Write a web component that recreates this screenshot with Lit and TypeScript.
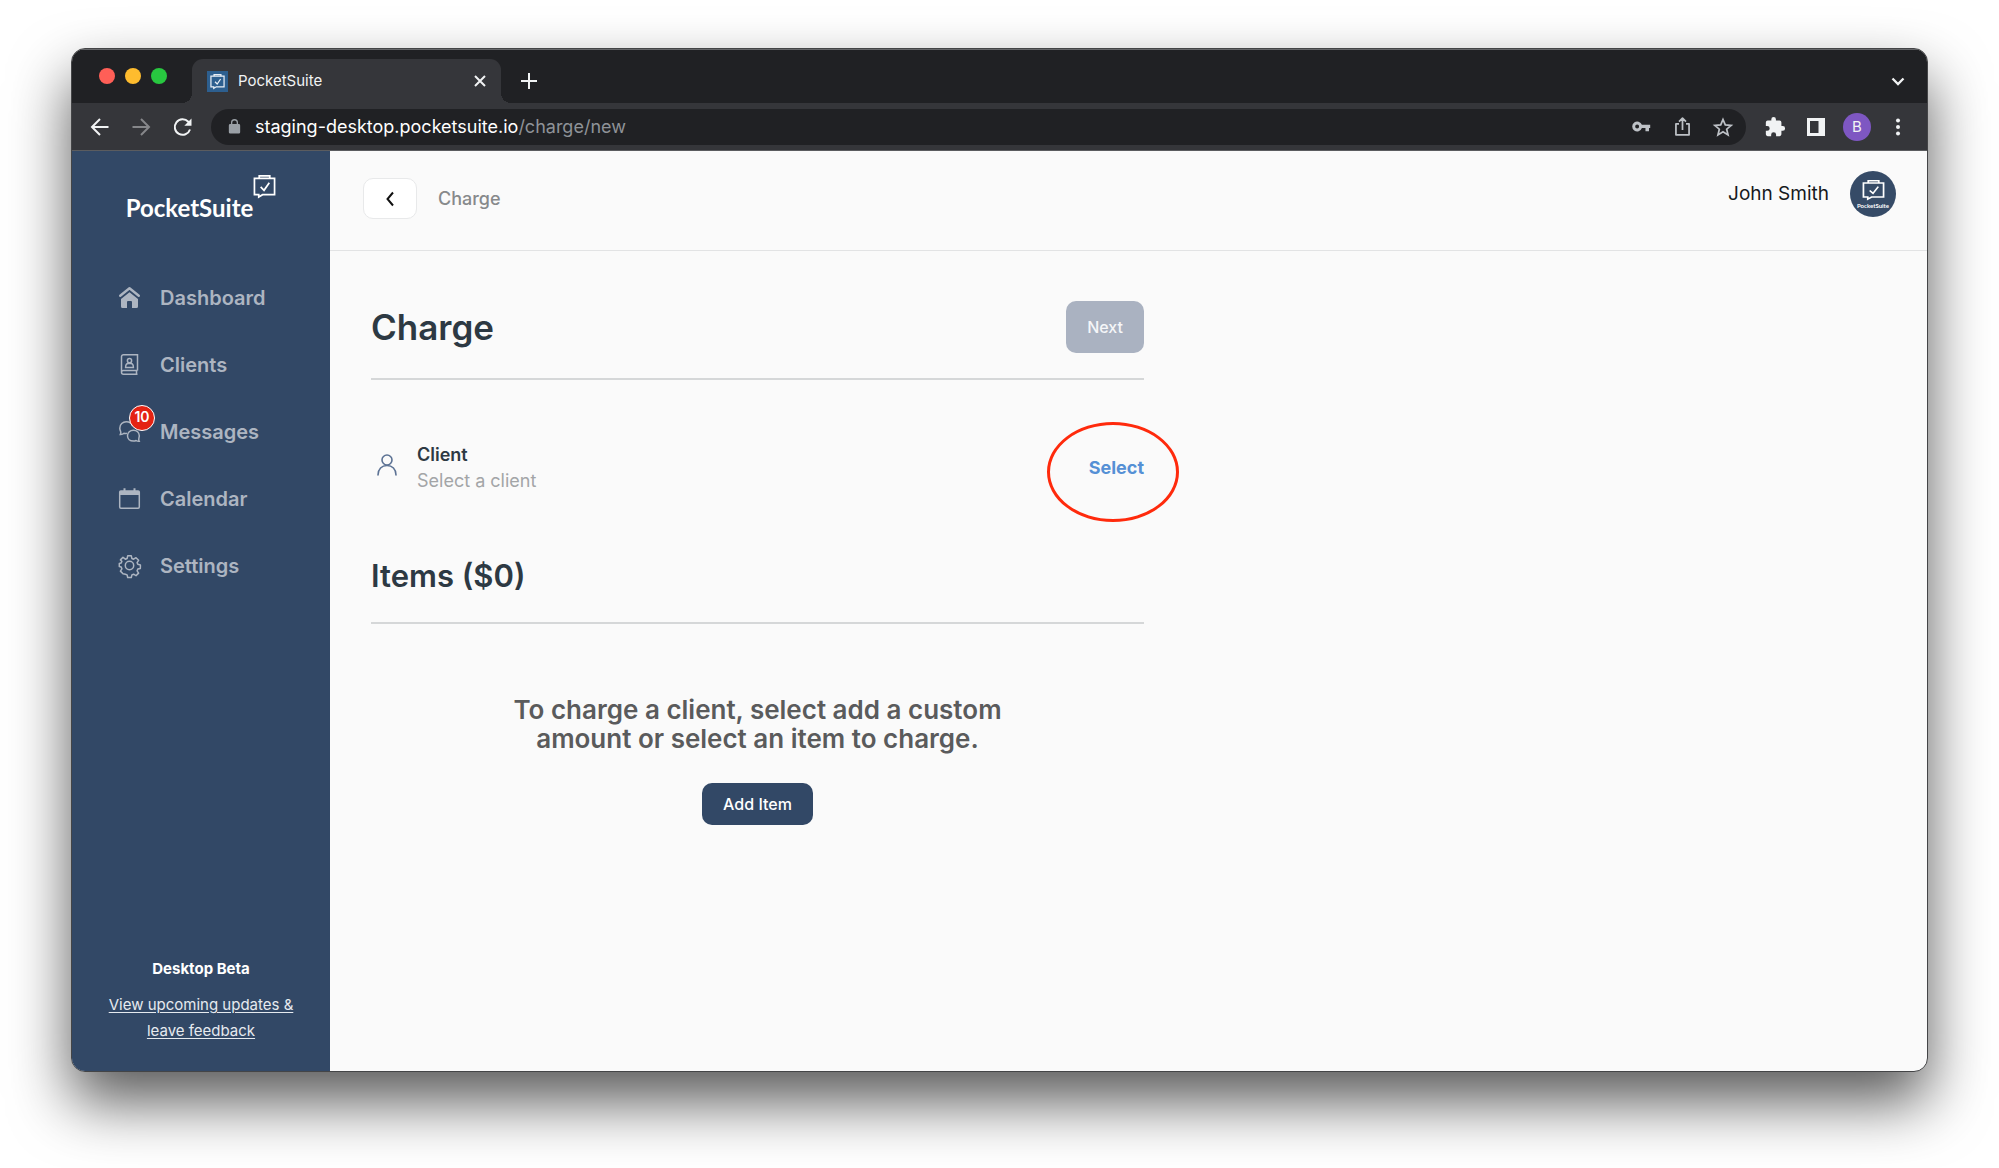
import { LitElement, html, css, svg, nothing } from "lit";
import type { SVGTemplateResult } from "lit";
import { customElement } from "lit/decorators.js";

const briefcase = svg`
  <path d="M6 20.5H1.5v-17h21v17H10L6 23z" />
  <path d="M6.5 3.5V1h11v2.500" />
  <path d="M8 12.500l3.500 3.500L17 8" />`;

interface NavItem {
  label: string;
  icon: SVGTemplateResult;
  badge?: number;
}

const navItems: NavItem[] = [
  {
    label: "Dashboard",
    icon: svg`
      <path d="M1.200 8.700 10.500 1.200l9.300 7.500" stroke-width="2.400" stroke-linecap="round" stroke-linejoin="round" />
      <path d="M10.500 5.300 19 12v7.500a1.500 1.500 0 0 1-1.500 1.500H13v-6a1 1 0 0 0-1-1H9a1 1 0 0 0-1 1v6H3.500A1.500 1.500 0 0 1 2 19.500V12z" fill="currentColor" stroke="none" />`,
  },
  {
    label: "Clients",
    icon: svg`
      <path d="M18.500 16.500V.700H4.500A2 2 0 0 0 2.500 2.700v15.600a2 2 0 0 0 2 2H18.500M2.500 18.300a1.800 1.800 0 0 1 2-1.800h14M17.500 16.500v3.800" />
      <circle cx="10.500" cy="6.700" r="2.100" />
      <path d="M6.600 13.500c0-2.300 1-3.800 2.500-3.900h2.800c1.500.1 2.500 1.600 2.500 3.900z" />`,
  },
  {
    label: "Messages",
    badge: 10,
    icon: svg`
      <path d="M8 12.300c-1.300.5-2 .4-3 0-1 1-2.200 1.300-3.700 1.200.6-1.300.8-2.200.3-3.200C1.100 9.300.800 8.300.800 7.200.800 3.400 3.700.800 7.300.800c3 0 5.500 1.700 6.200 4.200" />
      <path d="M20.200 20.300c-.6-1.200-.6-2.200-.3-3.300.3-.8.400-1.300.4-2.200 0-3.200-2.600-5.600-5.900-5.600s-5.900 2.400-5.900 5.600 2.600 5.300 5.900 5.300c1 0 1.900-.2 2.700-.6.900.6 1.800.9 3.100.8z" />`,
  },
  {
    label: "Calendar",
    icon: svg`
      <rect x=".700" y="3" width="19.600" height="17.300" rx="1.200" />
      <path d="M.700 3h19.600v4H.700z" fill="currentColor" stroke="none" />
      <path d="M5.500.200v5M15.500.200v5" stroke-width="2" />`,
  },
  {
    label: "Settings",
    icon: svg`
      <circle cx="10.500" cy="10.500" r="4.200" />
      <path stroke-linejoin="round" d="M8.700.800h3.600l.6 2.700 1.700.7 2.400-1.500 1.300 1.300 1.300 1.300-1.500 2.300.7 1.700 2.600.6v1.800l-.1 1.800-2.500.6-.7 1.700 1.500 2.300-1.300 1.300-1.300 1.300-2.400-1.500-1.700.7-.6 2.600H8.700l-.6-2.600-1.700-.7L4 18.700l-1.300-1.300-1.300-1.300 1.500-2.300-.7-1.700-1.900-.5V8.400l1.900-.5.700-1.700L1.400 4.900l1.300-1.300L4 2.300l2.400 1.900 1.700-.7z" />`,
  },
];

@customElement("app-root")
class AppRoot extends LitElement {
  static styles = css`
    :host {
      --navy: #324866;
      --ink: #2d3943;
      --rule: #d5d7d8;
      display: flex;
      box-sizing: border-box;
      min-height: 100vh;
      padding: 48px 71px 96px;
      background: #fff;
      color: var(--ink);
      font-family: Inter, "Liberation Sans", sans-serif;
      font-size: 18px;
      line-height: 26px;
    }
    * {
      box-sizing: border-box;
    }
    h1,
    h2,
    p {
      margin: 0;
    }
    button {
      font: inherit;
      color: inherit;
      border: 0;
      padding: 0;
      background: none;
    }
    a {
      color: inherit;
    }
    svg {
      display: block;
      fill: none;
      stroke: currentColor;
      flex: none;
      overflow: visible;
    }
    .solid {
      fill: currentColor;
      stroke: none;
    }
    .window {
      flex: 1;
      min-width: 0;
      display: flex;
      flex-direction: column;
      border: 1px solid #444547;
      border-radius: 14px;
      overflow: hidden;
      background: #fafafa;
      box-shadow: 0 30px 60px rgba(0, 0, 0, 0.65);
    }

    /* Browser chrome */
    .tabs {
      display: flex;
      align-items: stretch;
      height: 54px;
      padding: 0 17px 0 27px;
      background: #202124;
      box-shadow: inset 0 1px #66676a;
      color: #f1f3f4;
    }
    .lights {
      display: flex;
      align-items: center;
      gap: 10px;
      margin-right: 25px;
    }
    .light {
      width: 16px;
      height: 16px;
      border-radius: 50%;
    }
    .close {
      background: #ff5f57;
    }
    .minimise {
      background: #febc2e;
    }
    .zoom {
      background: #28c840;
    }
    .tab {
      position: relative;
      display: flex;
      align-items: center;
      width: 309px;
      margin-top: 10px;
      padding: 0 11px 0 15px;
      border-radius: 11px 11px 0 0;
      background: #35363a;
      font-size: 15px;
    }
    .tab::before,
    .tab::after {
      content: "";
      position: absolute;
      bottom: 0;
      width: 10px;
      height: 10px;
    }
    .tab::before {
      right: 100%;
      background: radial-gradient(circle at 0 0, transparent 10px, #35363a 10px);
    }
    .tab::after {
      left: 100%;
      background: radial-gradient(circle at 100% 0, transparent 10px, #35363a 10px);
    }
    .favicon {
      padding: 3px;
      margin-right: 10px;
      background: #2d5f8f;
      color: #e8eef5;
    }
    .tab-title {
      flex: 1;
    }
    .new-tab {
      margin: 10px auto 0 18px;
    }
    .tab-search {
      margin-top: 10px;
    }
    .toolbar {
      display: flex;
      align-items: center;
      gap: 13px;
      height: 48px;
      padding: 0 15px 0 14px;
      background: #35363a;
      border-bottom: 1px solid #5b5c5f;
      color: #f1f3f4;
    }
    .tool {
      display: grid;
      place-items: center;
      width: 28px;
      height: 28px;
      flex: none;
    }
    .muted {
      color: #86878a;
    }
    .omnibox {
      flex: 1;
      min-width: 0;
      display: flex;
      align-items: center;
      gap: 13px;
      height: 36px;
      margin: 0 2px;
      padding: 0 9px;
      border-radius: 18px;
      background: #202124;
      color: #bdc1c6;
    }
    .site {
      flex: 1;
      min-width: 0;
      display: flex;
      align-items: center;
      gap: 7px;
    }
    .lock {
      color: #9aa0a6;
    }
    .host {
      color: #fff;
    }
    .path {
      color: #8f9398;
    }
    .profile {
      border-radius: 50%;
      background: #7e57c2;
      font-size: 15px;
    }

    /* Application */
    .app {
      flex: 1;
      display: flex;
    }
    .sidebar {
      display: flex;
      flex-direction: column;
      width: 258px;
      flex: none;
      padding-bottom: 27px;
      background: var(--navy);
      color: #fff;
    }
    .brand {
      display: flex;
      justify-content: center;
      height: 113px;
      padding-top: 24px;
      text-decoration: none;
      font: 700 24px/30px Lato, sans-serif;
    }
    .brand-name {
      margin-top: 18px;
    }
    .nav {
      flex: 1;
      color: #adb5c1;
    }
    .nav-link {
      display: flex;
      align-items: center;
      gap: 20px;
      height: 67px;
      padding-left: 47px;
      font-size: 20px;
      font-weight: 600;
      text-decoration: none;
    }
    .nav-icon {
      position: relative;
    }
    .badge {
      position: absolute;
      left: 10px;
      top: -16px;
      width: 26px;
      height: 26px;
      border: 1px solid #fff;
      border-radius: 50%;
      background: #e42313;
      color: #fff;
      font-size: 14px;
      font-weight: 600;
      line-height: 22px;
      text-align: center;
    }
    .beta {
      display: flex;
      flex-direction: column;
      gap: 10px;
      padding: 0 24px;
      font-size: 15px;
      text-align: center;
    }
    .beta-title {
      font-weight: 700;
    }
    .feedback {
      color: #e6eaef;
      text-underline-offset: 2px;
    }
    .page {
      flex: 1;
      min-width: 0;
    }
    .header {
      display: flex;
      justify-content: space-between;
      align-items: flex-start;
      height: 100px;
      padding: 20px 31px 0 33px;
      border-bottom: 1px solid #e2e3e4;
    }
    .crumb {
      display: flex;
      align-items: center;
      gap: 21px;
      margin-top: 7px;
      color: #87898b;
      font-weight: 500;
    }
    .back {
      display: grid;
      place-items: center;
      width: 54px;
      height: 41px;
      border: 1px solid #e8e9ea;
      border-radius: 10px;
      background: #fff;
      color: #111;
    }
    .user {
      display: flex;
      align-items: center;
      gap: 21px;
      color: #16191c;
      font-size: 19px;
    }
    .avatar {
      display: flex;
      flex-direction: column;
      align-items: center;
      width: 46px;
      height: 46px;
      padding-top: 9px;
      border-radius: 50%;
      background: #364b67;
      color: #fff;
      font: 700 6px/8px Lato, sans-serif;
    }
    .avatar svg {
      margin-bottom: 2px;
    }
    .content {
      max-width: 855px;
      padding: 50px 41px;
    }
    .title-row {
      display: flex;
      align-items: center;
      justify-content: space-between;
      padding-bottom: 25px;
      border-bottom: 2px solid var(--rule);
    }
    .title {
      font-size: 35px;
      line-height: 44px;
      font-weight: 600;
    }
    .next {
      padding: 13px 21px;
      border-radius: 10px;
      background: #aab2c1;
      color: #f5f6f8;
      font-size: 16px;
      font-weight: 500;
    }
    .client {
      display: flex;
      align-items: center;
      margin: 62px 0 63px;
    }
    .person {
      margin: 0 19px 6px 5px;
      color: #5c7294;
    }
    .client-text {
      flex: 1;
    }
    .client-name {
      font-size: 18px;
      line-height: 26px;
      font-weight: 600;
    }
    .hint {
      color: #a3a5a7;
    }
    .select {
      position: relative;
      color: #5590d5;
      font-weight: 700;
    }
    .ring {
      position: absolute;
      left: -42px;
      top: -33px;
      width: 132px;
      height: 100px;
      border: 3px solid #ff2a0c;
      border-radius: 50%;
    }
    .items {
      padding-bottom: 27px;
      border-bottom: 2px solid var(--rule);
      font-size: 31px;
      line-height: 38px;
      font-weight: 600;
    }
    .empty {
      display: flex;
      flex-direction: column;
      align-items: center;
      gap: 30px;
      padding-top: 71px;
    }
    .message {
      max-width: 510px;
      color: #5a5b5c;
      font-size: 26px;
      line-height: 29px;
      font-weight: 600;
      text-align: center;
    }
    .add {
      height: 42px;
      padding: 0 21px;
      border-radius: 10px;
      background: var(--navy);
      color: #fff;
      font-size: 16px;
      font-weight: 500;
    }
  `;

  private renderTabs() {
    return html`
      <div class="tabs">
        <div class="lights">
          <span class="light close"></span>
          <span class="light minimise"></span>
          <span class="light zoom"></span>
        </div>
        <div class="tab">
          <svg class="favicon" width="21" height="21" viewBox="0 0 24 24" stroke-width="2">${briefcase}</svg>
          <span class="tab-title">PocketSuite</span>
          <button aria-label="Close tab">
            <svg width="20" height="20" viewBox="0 0 20 20" stroke-width="2"><path d="M5 5l10 10M15 5L5 15" /></svg>
          </button>
        </div>
        <button class="new-tab" aria-label="New tab">
          <svg width="20" height="20" viewBox="0 0 20 20" stroke-width="2"><path d="M10 2v16M2 10h16" /></svg>
        </button>
        <button class="tab-search" aria-label="Search tabs">
          <svg width="24" height="24" viewBox="0 0 24 24" stroke-width="2.300"><path d="M6.500 9.500l5.500 5.500 5.500-5.500" /></svg>
        </button>
      </div>
    `;
  }

  private renderToolbar() {
    return html`
      <div class="toolbar">
        <button class="tool" aria-label="Back">
          <svg width="24" height="24" viewBox="0 0 24 24" stroke-width="2"><path d="M20.500 12H4.500M12 4l-8 8 8 8" /></svg>
        </button>
        <button class="tool muted" aria-label="Forward">
          <svg width="24" height="24" viewBox="0 0 24 24" stroke-width="2"><path d="M3.500 12h16M12 4l8 8-8 8" /></svg>
        </button>
        <button class="tool" aria-label="Reload">
          <svg width="24" height="24" viewBox="0 0 24 24" stroke-width="2">
            <path d="M20 14.500A7.800 7.800 0 1 1 18.300 6.700l1.500 1.500" />
            <path class="solid" d="M21.500 3.500v7.200h-7.200z" />
          </svg>
        </button>
        <div class="omnibox">
          <div class="site">
            <span class="tool lock">
              <svg class="solid" width="17" height="17" viewBox="0 0 24 24">
                <path d="M18 8.500h-1V6.500a5 5 0 0 0-10 0v2H6a2 2 0 0 0-2 2V20a2 2 0 0 0 2 2h12a2 2 0 0 0 2-2v-9.500a2 2 0 0 0-2-2zm-9.100 0v-2a3.100 3.100 0 0 1 6.200 0v2z" />
              </svg>
            </span>
            <span><span class="host">staging-desktop.pocketsuite.io</span><span class="path">/charge/new</span></span>
          </div>
          <button class="tool" aria-label="Saved passwords">
            <svg class="solid" width="19" height="19" viewBox="0 0 24 24">
              <path fill-rule="evenodd" d="M12.500 9.800A6.300 6.300 0 1 0 12.500 14H17v4h4.500v-4H23V9.800zM6.500 14.500a2.500 2.500 0 1 1 0-5 2.500 2.500 0 0 1 0 5z" />
            </svg>
          </button>
          <button class="tool" aria-label="Share">
            <svg width="21" height="21" viewBox="0 0 24 24" stroke-width="2">
              <path stroke-linejoin="round" d="M8 9H4.500v12.500h15V9H16M12 16V3M8 6.500l4-4 4 4" />
            </svg>
          </button>
          <button class="tool" aria-label="Bookmark">
            <svg width="22" height="22" viewBox="0 0 24 24" stroke-width="1.900">
              <path d="M12 3.800l2.500 5.900 6.400.5-4.900 4.200 1.500 6.200L12 17.300l-5.500 3.300L8 14.400l-4.900-4.200 6.400-.5z" />
            </svg>
          </button>
        </div>
        <button class="tool" aria-label="Extensions">
          <svg class="solid" width="22" height="22" viewBox="0 0 24 24">
            <path d="M20.500 11H19V7a2 2 0 0 0-2-2h-4V3.500a2.500 2.500 0 0 0-5 0V5H4a2 2 0 0 0-2 2v3.800h1.500a2.700 2.700 0 0 1 0 5.400H2V20a2 2 0 0 0 2 2h3.800v-1.500a2.700 2.700 0 0 1 5.400 0V22H17a2 2 0 0 0 2-2v-4h1.500a2.500 2.500 0 0 0 0-5z" />
          </svg>
        </button>
        <button class="tool" aria-label="Side panel">
          <svg class="solid" width="18" height="18" viewBox="0 0 18 18">
            <path fill-rule="evenodd" d="M0 0h18v18H0zM3 3v12h8.500V3z" />
          </svg>
        </button>
        <button class="tool profile" aria-label="Profile">B</button>
        <button class="tool" aria-label="Menu">
          <svg class="solid" width="20" height="20" viewBox="0 0 20 20">
            <circle cx="10" cy="3.500" r="2" /><circle cx="10" cy="10" r="2" /><circle cx="10" cy="16.500" r="2" />
          </svg>
        </button>
      </div>
    `;
  }

  private renderSidebar() {
    return html`
      <aside class="sidebar">
        <a class="brand" href="#">
          <span class="brand-name">PocketSuite</span>
          <svg width="23" height="23" viewBox="0 0 24 24" stroke-width="1.800">${briefcase}</svg>
        </a>
        <nav class="nav">
          ${navItems.map(
            (item) => html`
              <a class="nav-link" href="#">
                <span class="nav-icon">
                  <svg width="21" height="21" viewBox="0 0 21 21" stroke-width="1.500">${item.icon}</svg>
                  ${item.badge ? html`<span class="badge">${item.badge}</span>` : nothing}
                </span>
                ${item.label}
              </a>
            `
          )}
        </nav>
        <div class="beta">
          <p class="beta-title">Desktop Beta</p>
          <a class="feedback" href="#">View upcoming updates &amp; leave feedback</a>
        </div>
      </aside>
    `;
  }

  render() {
    return html`
      <div class="window">
        ${this.renderTabs()} ${this.renderToolbar()}
        <div class="app">
          ${this.renderSidebar()}
          <div class="page">
            <header class="header">
              <div class="crumb">
                <button class="back" aria-label="Go back">
                  <svg width="16" height="16" viewBox="0 0 16 16" stroke-width="2"><path d="M11 1.500L5.500 8l5.500 6.500" /></svg>
                </button>
                <span>Charge</span>
              </div>
              <div class="user">
                <span>John Smith</span>
                <span class="avatar">
                  <svg width="23" height="20" viewBox="0 0 24 24" preserveAspectRatio="none" stroke-width="1.800">${briefcase}</svg>
                  PocketSuite
                </span>
              </div>
            </header>
            <main class="content">
              <div class="title-row">
                <h1 class="title">Charge</h1>
                <button class="next" disabled>Next</button>
              </div>
              <section class="client">
                <svg class="person" width="22" height="22" viewBox="0 0 22 22" stroke-width="1.600" stroke-linecap="round">
                  <circle cx="11" cy="6" r="5" />
                  <path d="M2 21c0-6 3.800-9.500 9-9.500s9 3.500 9 9.500" />
                </svg>
                <div class="client-text">
                  <h2 class="client-name">Client</h2>
                  <p class="hint">Select a client</p>
                </div>
                <button class="select">Select<span class="ring"></span></button>
              </section>
              <h2 class="items">Items ($0)</h2>
              <section class="empty">
                <p class="message">To charge a client, select add a custom amount or select an item to charge.</p>
                <button class="add">Add Item</button>
              </section>
            </main>
          </div>
        </div>
      </div>
    `;
  }
}
